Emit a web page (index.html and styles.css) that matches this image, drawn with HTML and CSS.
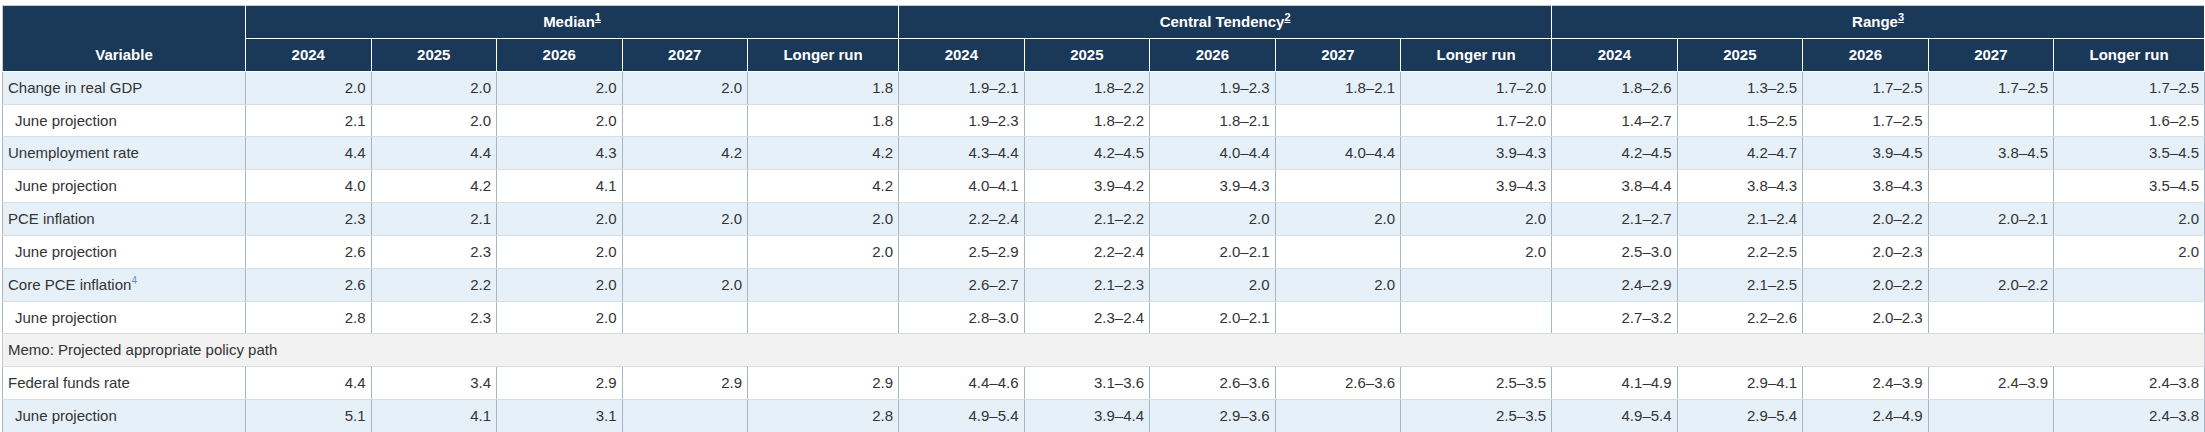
FILE: index.html
```html
<!DOCTYPE html>
<html lang="en">
<head>
<meta charset="utf-8">
<title>Economic projections</title>
<link rel="stylesheet" href="styles.css">
</head>
<body>
<table class="proj">
  <colgroup>
    <col class="c-var">
    <col class="c-yr"><col class="c-yr"><col class="c-yr"><col class="c-yr"><col class="c-lr">
    <col class="c-yr"><col class="c-yr"><col class="c-yr"><col class="c-yr"><col class="c-lr">
    <col class="c-yr"><col class="c-yr"><col class="c-yr"><col class="c-yr"><col class="c-lr">
  </colgroup>
  <thead>
    <tr>
      <th rowspan="2" class="h-var">Variable</th>
      <th colspan="5">Median<sup><a href="#n1">1</a></sup></th>
      <th colspan="5">Central Tendency<sup><a href="#n2">2</a></sup></th>
      <th colspan="5">Range<sup><a href="#n3">3</a></sup></th>
    </tr>
    <tr>
      <th>2024</th><th>2025</th><th>2026</th><th>2027</th><th>Longer run</th>
      <th>2024</th><th>2025</th><th>2026</th><th>2027</th><th>Longer run</th>
      <th>2024</th><th>2025</th><th>2026</th><th>2027</th><th>Longer run</th>
    </tr>
  </thead>
  <tbody>
    <tr class="alt">
      <td class="lbl">Change in real GDP</td>
      <td>2.0</td><td>2.0</td><td>2.0</td><td>2.0</td><td>1.8</td>
      <td>1.9–2.1</td><td>1.8–2.2</td><td>1.9–2.3</td><td>1.8–2.1</td><td>1.7–2.0</td>
      <td>1.8–2.6</td><td>1.3–2.5</td><td>1.7–2.5</td><td>1.7–2.5</td><td>1.7–2.5</td>
    </tr>
    <tr>
      <td class="lbl sub">June projection</td>
      <td>2.1</td><td>2.0</td><td>2.0</td><td></td><td>1.8</td>
      <td>1.9–2.3</td><td>1.8–2.2</td><td>1.8–2.1</td><td></td><td>1.7–2.0</td>
      <td>1.4–2.7</td><td>1.5–2.5</td><td>1.7–2.5</td><td></td><td>1.6–2.5</td>
    </tr>
    <tr class="alt">
      <td class="lbl">Unemployment rate</td>
      <td>4.4</td><td>4.4</td><td>4.3</td><td>4.2</td><td>4.2</td>
      <td>4.3–4.4</td><td>4.2–4.5</td><td>4.0–4.4</td><td>4.0–4.4</td><td>3.9–4.3</td>
      <td>4.2–4.5</td><td>4.2–4.7</td><td>3.9–4.5</td><td>3.8–4.5</td><td>3.5–4.5</td>
    </tr>
    <tr>
      <td class="lbl sub">June projection</td>
      <td>4.0</td><td>4.2</td><td>4.1</td><td></td><td>4.2</td>
      <td>4.0–4.1</td><td>3.9–4.2</td><td>3.9–4.3</td><td></td><td>3.9–4.3</td>
      <td>3.8–4.4</td><td>3.8–4.3</td><td>3.8–4.3</td><td></td><td>3.5–4.5</td>
    </tr>
    <tr class="alt">
      <td class="lbl">PCE inflation</td>
      <td>2.3</td><td>2.1</td><td>2.0</td><td>2.0</td><td>2.0</td>
      <td>2.2–2.4</td><td>2.1–2.2</td><td>2.0</td><td>2.0</td><td>2.0</td>
      <td>2.1–2.7</td><td>2.1–2.4</td><td>2.0–2.2</td><td>2.0–2.1</td><td>2.0</td>
    </tr>
    <tr>
      <td class="lbl sub">June projection</td>
      <td>2.6</td><td>2.3</td><td>2.0</td><td></td><td>2.0</td>
      <td>2.5–2.9</td><td>2.2–2.4</td><td>2.0–2.1</td><td></td><td>2.0</td>
      <td>2.5–3.0</td><td>2.2–2.5</td><td>2.0–2.3</td><td></td><td>2.0</td>
    </tr>
    <tr class="alt">
      <td class="lbl">Core PCE inflation<sup class="note"><a href="#n4">4</a></sup></td>
      <td>2.6</td><td>2.2</td><td>2.0</td><td>2.0</td><td></td>
      <td>2.6–2.7</td><td>2.1–2.3</td><td>2.0</td><td>2.0</td><td></td>
      <td>2.4–2.9</td><td>2.1–2.5</td><td>2.0–2.2</td><td>2.0–2.2</td><td></td>
    </tr>
    <tr>
      <td class="lbl sub">June projection</td>
      <td>2.8</td><td>2.3</td><td>2.0</td><td></td><td></td>
      <td>2.8–3.0</td><td>2.3–2.4</td><td>2.0–2.1</td><td></td><td></td>
      <td>2.7–3.2</td><td>2.2–2.6</td><td>2.0–2.3</td><td></td><td></td>
    </tr>
    <tr class="memo">
      <td colspan="16" class="lbl">Memo: Projected appropriate policy path</td>
    </tr>
    <tr>
      <td class="lbl">Federal funds rate</td>
      <td>4.4</td><td>3.4</td><td>2.9</td><td>2.9</td><td>2.9</td>
      <td>4.4–4.6</td><td>3.1–3.6</td><td>2.6–3.6</td><td>2.6–3.6</td><td>2.5–3.5</td>
      <td>4.1–4.9</td><td>2.9–4.1</td><td>2.4–3.9</td><td>2.4–3.9</td><td>2.4–3.8</td>
    </tr>
    <tr class="alt">
      <td class="lbl sub">June projection</td>
      <td>5.1</td><td>4.1</td><td>3.1</td><td></td><td>2.8</td>
      <td>4.9–5.4</td><td>3.9–4.4</td><td>2.9–3.6</td><td></td><td>2.5–3.5</td>
      <td>4.9–5.4</td><td>2.9–5.4</td><td>2.4–4.9</td><td></td><td>2.4–3.8</td>
    </tr>
  </tbody>
</table>
</body>
</html>
```
FILE: styles.css
```css
html, body {
  margin: 0;
  padding: 0;
  background: #ffffff;
}

body {
  padding: 5px 2px 0 2px;
  font-family: "Liberation Sans", Arial, sans-serif;
  font-size: 15px;
  color: #333333;
}

.proj {
  width: 100%;
  table-layout: fixed;
  border-collapse: collapse;
  border: 1px solid #c5cbd1;
}

.c-var { width: 243px; }
.c-yr { width: 125.5px; }
.c-lr { width: 151px; }

.proj th {
  background: #1a3857;
  color: #ffffff;
  font-weight: bold;
  text-align: center;
  vertical-align: middle;
  padding: 7px 5px;
  line-height: 17.85px;
  border: 1px solid #ffffff;
}

.proj thead tr:first-child th {
  border-top-color: #c5cbd1;
}

.proj th.h-var {
  vertical-align: bottom;
  border-left-color: #c5cbd1;
}

.proj th sup {
  font-size: 11px;
  line-height: 0;
  vertical-align: 6px;
}

.proj th sup a {
  color: #ffffff;
  text-decoration: underline;
}

.proj td {
  padding: 7px 5px;
  line-height: 17.85px;
  text-align: right;
  white-space: nowrap;
  border-left: 1px solid #a8b5c3;
  border-right: 1px solid #a8b5c3;
  border-top: 1px solid #d8dde2;
  border-bottom: 1px solid #d8dde2;
  background: #ffffff;
}

.proj tr.alt td {
  background: #e6f0f9;
}

.proj td.lbl {
  text-align: left;
}

.proj td.sub {
  padding-left: 12px;
}

.proj tr.memo td {
  background: #f2f2f2;
  border-left-color: #c5cbd1;
  border-right-color: #c5cbd1;
}

.proj sup.note {
  font-size: 10px;
  line-height: 0;
  vertical-align: 6px;
}

.proj sup.note a {
  color: #6b8db3;
  text-decoration: none;
}
```
